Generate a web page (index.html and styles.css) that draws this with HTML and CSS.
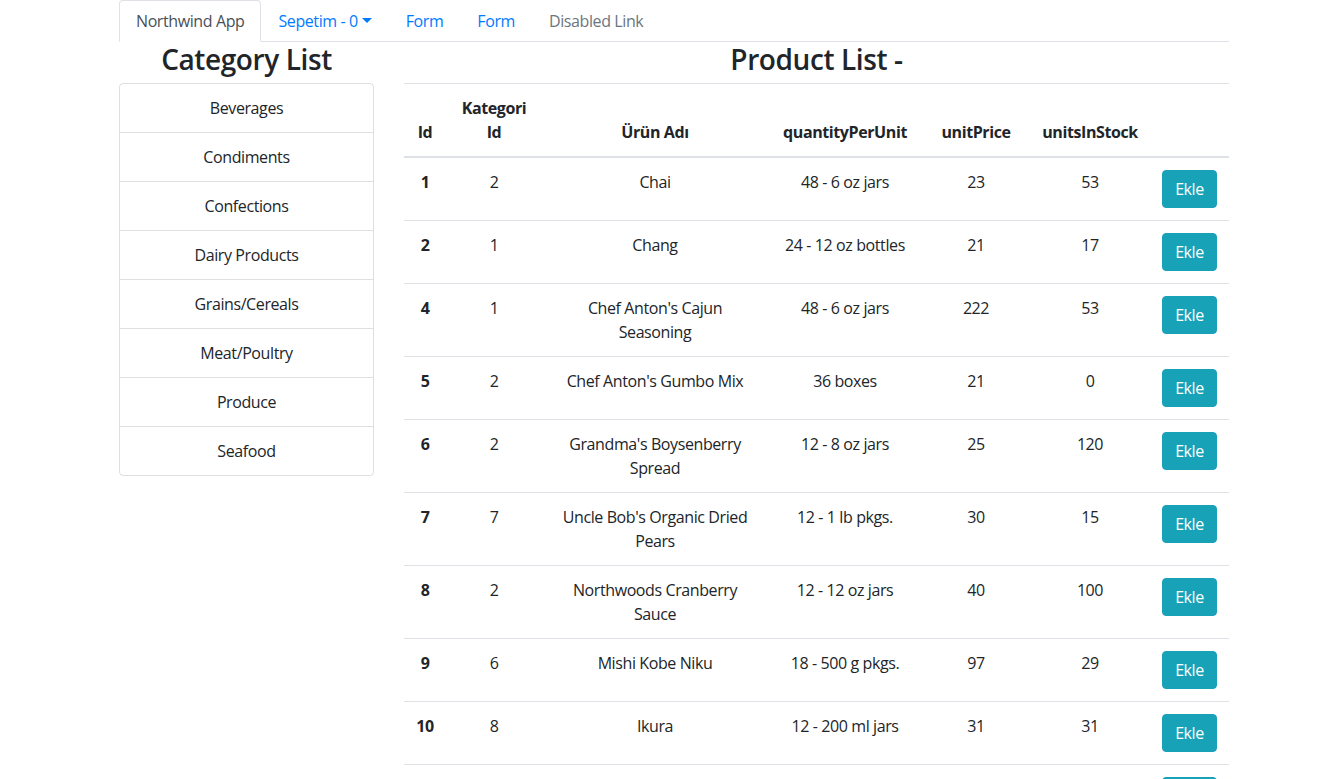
FILE: index.html
```html
<!DOCTYPE html>
<html lang="tr">
<head>
<meta charset="utf-8">
<title>Northwind App</title>
<link rel="stylesheet" href="styles.css">
</head>
<body>
<div class="page">
  <ul class="tabs">
    <li class="tab active">Northwind App</li>
    <li class="tab link">Sepetim - 0<span class="caret"></span></li>
    <li class="tab link">Form</li>
    <li class="tab link">Form</li>
    <li class="tab disabled">Disabled Link</li>
  </ul>
  <div class="layout">
    <div class="side">
      <h3 class="title">Category List</h3>
      <ul class="list">
        <li>Beverages</li>
        <li>Condiments</li>
        <li>Confections</li>
        <li>Dairy Products</li>
        <li>Grains/Cereals</li>
        <li>Meat/Poultry</li>
        <li>Produce</li>
        <li>Seafood</li>
      </ul>
    </div>
    <div class="main">
      <h3 class="title">Product List - </h3>
      <table class="products">
        <colgroup>
          <col class="c1"><col class="c2"><col class="c3"><col class="c4"><col class="c5"><col class="c6"><col class="c7">
        </colgroup>
        <thead>
          <tr><th>Id</th><th>Kategori Id</th><th>Ürün Adı</th><th>quantityPerUnit</th><th>unitPrice</th><th>unitsInStock</th><th></th></tr>
        </thead>
        <tbody>
          <tr><th>1</th><td>2</td><td>Chai</td><td>48 - 6 oz jars</td><td>23</td><td>53</td><td><button class="btn">Ekle</button></td></tr>
          <tr><th>2</th><td>1</td><td>Chang</td><td>24 - 12 oz bottles</td><td>21</td><td>17</td><td><button class="btn">Ekle</button></td></tr>
          <tr><th>4</th><td>1</td><td>Chef Anton's Cajun Seasoning</td><td>48 - 6 oz jars</td><td>222</td><td>53</td><td><button class="btn">Ekle</button></td></tr>
          <tr><th>5</th><td>2</td><td>Chef Anton's Gumbo Mix</td><td>36 boxes</td><td>21</td><td>0</td><td><button class="btn">Ekle</button></td></tr>
          <tr><th>6</th><td>2</td><td>Grandma's Boysenberry Spread</td><td>12 - 8 oz jars</td><td>25</td><td>120</td><td><button class="btn">Ekle</button></td></tr>
          <tr><th>7</th><td>7</td><td>Uncle Bob's Organic Dried Pears</td><td>12 - 1 lb pkgs.</td><td>30</td><td>15</td><td><button class="btn">Ekle</button></td></tr>
          <tr><th>8</th><td>2</td><td>Northwoods Cranberry Sauce</td><td>12 - 12 oz jars</td><td>40</td><td>100</td><td><button class="btn">Ekle</button></td></tr>
          <tr><th>9</th><td>6</td><td>Mishi Kobe Niku</td><td>18 - 500 g pkgs.</td><td>97</td><td>29</td><td><button class="btn">Ekle</button></td></tr>
          <tr><th>10</th><td>8</td><td>Ikura</td><td>12 - 200 ml jars</td><td>31</td><td>31</td><td><button class="btn">Ekle</button></td></tr>
          <tr><th>11</th><td>4</td><td>Queso Cabrales</td><td>1 kg pkg.</td><td>21</td><td>22</td><td><button class="btn">Ekle</button></td></tr>
        </tbody>
      </table>
    </div>
  </div>
</div>
</body>
</html>
```

FILE: styles.css
```css
* { box-sizing: border-box; }
html, body { margin: 0; padding: 0; background: #fff; }
body {
  font-family: "Open Sans", "Noto Sans", sans-serif;
  font-size: 16px;
  line-height: 1.5;
  letter-spacing: -0.025em;
  color: #212529;
}
.page {
  width: 1141px;
  margin: 0 auto;
  padding-left: 31px;
}
.tabs {
  list-style: none;
  margin: 0;
  padding: 0;
  display: flex;
  border-bottom: 1px solid #dee2e6;
}
.tab {
  padding: 8px 16px;
  border: 1px solid transparent;
  border-top-left-radius: 4px;
  border-top-right-radius: 4px;
  margin-bottom: -1px;
  white-space: nowrap;
}
.tab.active {
  color: #495057;
  background: #fff;
  border-color: #dee2e6 #dee2e6 #fff;
}
.tab.link { color: #007bff; }
.tab.disabled { color: #6c757d; }
.caret {
  display: inline-block;
  margin-left: 4px;
  vertical-align: 4px;
  border-top: 5px solid;
  border-right: 5px solid transparent;
  border-left: 5px solid transparent;
}
.layout {
  display: grid;
  grid-template-columns: 255px 825px;
  column-gap: 30px;
}
.title {
  margin: 0 0 8px;
  padding-top: 2px;
  height: 33px;
  font-size: 28px;
  line-height: 31px;
  font-weight: 600;
  text-align: center;
}
.list {
  list-style: none;
  margin: 0;
  padding: 0;
  border: 1px solid rgba(0,0,0,.125);
  border-radius: 4px;
}
.list li {
  padding: 12px 20px;
  text-align: center;
  border-top: 1px solid rgba(0,0,0,.125);
}
.list li:first-child { border-top: 0; }
.products {
  width: 825px;
  border-collapse: collapse;
  table-layout: fixed;
  text-align: center;
}
.c1 { width: 42px; }
.c2 { width: 96px; }
.c3 { width: 226px; }
.c4 { width: 154px; }
.c5 { width: 108px; }
.c6 { width: 120px; }
.c7 { width: 79px; }
.products th, .products td {
  padding: 12px;
  vertical-align: top;
  border-top: 1px solid #dee2e6;
}
.products th { font-weight: 700; }
.products thead th {
  vertical-align: bottom;
  border-bottom: 2px solid #dee2e6;
}
.btn {
  font: inherit;
  letter-spacing: inherit;
  color: #fff;
  background: #17a2b8;
  border: 1px solid #17a2b8;
  border-radius: 4px;
  padding: 6px 12px;
  line-height: 24px;
  cursor: pointer;
}
```
